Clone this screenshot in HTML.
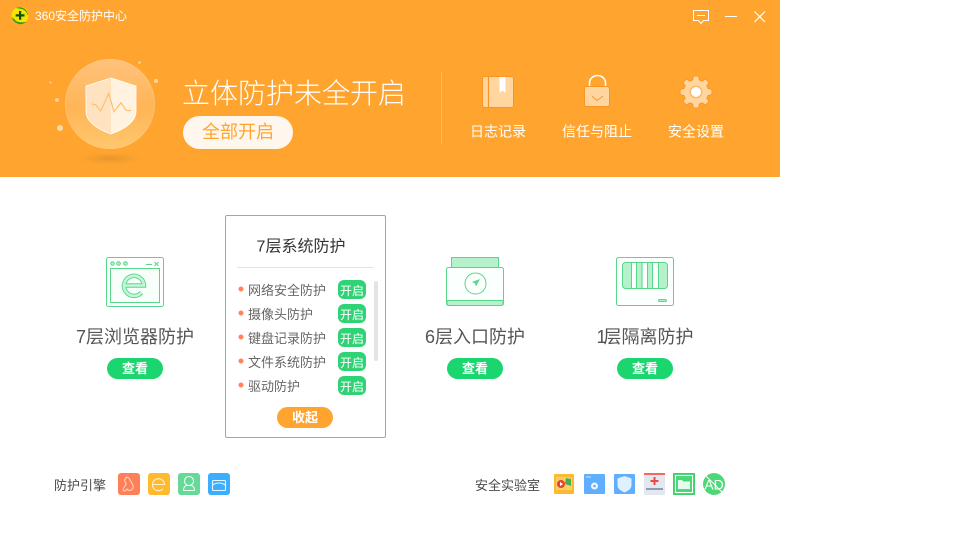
<!DOCTYPE html>
<html lang="zh"><head><meta charset="utf-8"><title>360安全防护中心</title>
<style>
html,body{margin:0;padding:0;background:#fff}
body{position:relative;width:960px;height:540px;overflow:hidden;font-family:"Liberation Sans","Noto Sans CJK SC",sans-serif;color:#4a4a4a}
.t{position:absolute;white-space:nowrap;text-align:center;transform:translate(-50%,-50%);line-height:1.2}
.l{position:absolute;white-space:nowrap;transform:translateY(-50%);line-height:1.2}
svg{position:absolute;left:0;top:0}
.w{color:#fff}
</style></head><body>
<svg width="960" height="540" viewBox="0 0 960 540">
<defs>
<linearGradient id="lg" x1="0" y1="0" x2="0" y2="1"><stop offset="0" stop-color="#ffc27c"/><stop offset=".55" stop-color="#ffb556"/><stop offset="1" stop-color="#ffc76e"/></linearGradient>
<radialGradient id="sh"><stop offset="0" stop-color="#e0912a"/><stop offset=".5" stop-color="#ed9a2c" stop-opacity=".7"/><stop offset="1" stop-color="#ffa52f" stop-opacity="0"/></radialGradient>
<radialGradient id="bt"><stop offset=".6" stop-color="#f79a25" stop-opacity=".5"/><stop offset="1" stop-color="#ffa52f" stop-opacity="0"/></radialGradient>
</defs>
<rect width="780" height="177" fill="#ffa52f"/>
<!-- logo -->
<circle cx="20" cy="15.5" r="8.500" fill="#f5e400"/>
<path d="M12 17a8.500 8.500 0 0 0 14 5q-7 1-10-1zM16 8a8.500 8.500 0 0 1 12 8q-2-6-6-7z" fill="#2a9a1e"/>
<path d="M19 11h2.200v3.300h3.300v2.200h-3.300v3.300h-2.200v-3.300h-3.300v-2.200h3.300z" fill="#0c4f12"/>
<!-- window controls -->
<path d="M693.500 10.500h15v10h-5l-2.500 3-2.500-3h-5z" fill="none" stroke="#fff" stroke-width="1"/>
<path d="M697 15.500h8" stroke="#fff"/>
<path d="M725 16.500h12" stroke="#fff"/>
<path d="M754.500 11.500l10.500 10.500M765 11.500l-10.500 10.500" stroke="#fff" stroke-width="1.200"/>
<!-- orb -->
<ellipse cx="110" cy="158.500" rx="38" ry="7" fill="url(#sh)" opacity=".8"/>
<circle cx="110" cy="104" r="45" fill="url(#lg)"/>
<circle cx="110" cy="104" r="44.500" fill="none" stroke="#ffd199" stroke-opacity=".35"/>
<path d="M111 78l25 8v25q0 14-25 23q-25-9-25-23v-25z" fill="#fff3e0"/>
<path d="M111 78l-25 8v25q0 14 25 23z" fill="#ffe3c0"/>
<path d="M111 78l25 8v25q0 14-25 23q-25-9-25-23v-25z" fill="none" stroke="#fff" stroke-width=".8"/>
<path d="M91.700 104l4.300 1 4.700 6 8-17.700 5.300 18.400 7-9 5 7.600 5 .4" fill="none" stroke="#ffbe73" stroke-width="1.200"/>
<circle cx="60" cy="128" r="3" fill="#ffd9a8"/><circle cx="57" cy="100" r="2" fill="#ffcf96"/><circle cx="50.500" cy="82.500" r="1.300" fill="#ffc684"/><circle cx="156" cy="81" r="2" fill="#ffd39f"/><circle cx="139.500" cy="62.500" r="1.500" fill="#ffc788"/>
<!-- all-on button -->
<ellipse cx="238" cy="138" rx="68" ry="26" fill="url(#bt)" opacity=".55"/>
<rect x="183" y="116" width="110" height="33" rx="16.500" fill="#fff6ee"/>
<path d="M441.500 72v72" stroke="#fff" stroke-opacity=".25"/>
<!-- book -->
<rect x="482.500" y="76.500" width="31" height="31" rx="2" fill="#ffd6a0" stroke="#fb9423"/>
<path d="M488.500 76.500v31" stroke="#fb9423" stroke-width="1.200"/>
<path d="M499.500 77h6v16l-3-2.500-3 2.500z" fill="#fff"/>
<!-- lock -->
<path d="M589.500 87v-4a8 7.500 0 0 1 16 0v4" fill="none" stroke="#fff" stroke-width="1.600"/>
<rect x="584.500" y="86.500" width="25" height="20" rx="2" fill="#ffd6a0" stroke="#fb9423"/>
<path d="M592 96l5 4.500 6-4.500" fill="none" stroke="#f59a33"/>
<!-- gear -->
<path d="M693 76.500h6l1 4.500 3 1.300 4-2.500 4 4-2.500 4 1.300 3 4.500 1v6l-4.500 1-1.300 3 2.500 4-4 4-4-2.500-3 1.300-1 4.500h-6l-1-4.500-3-1.300-4 2.500-4-4 2.500-4-1.300-3-4.500-1v-6l4.500-1 1.300-3-2.500-4 4-4 4 2.500 3-1.300z" transform="translate(696 92) scale(.87) translate(-696 -94.800)" fill="#ffd6a0" stroke="#fb9423" stroke-width="1.100"/>
<circle cx="696" cy="92" r="6.500" fill="#fb9423" opacity=".45"/><circle cx="696" cy="92" r="5" fill="#fff"/>
<!-- browser icon -->
<g stroke="#58d68a" fill="none">
<rect x="106.500" y="257.500" width="57" height="49" rx="2" fill="#fff"/>
<rect x="110.500" y="268.500" width="49" height="34" fill="#f8fffb"/>
<circle cx="112.500" cy="263.500" r="1.800" fill="#b5f2cc"/><circle cx="118.500" cy="263.500" r="1.800" fill="#b5f2cc"/><circle cx="125.500" cy="263.500" r="1.800" fill="#b5f2cc"/>
<path d="M146 264.500h6M154.500 262l4 4M158.500 262l-4 4"/>
<path d="M124.500 285.500h19.500a10 10 0 1 0-2.500 7" stroke="#58d68a" stroke-width="4.400"/>
<path d="M124.500 285.500h19.500a10 10 0 1 0-2.500 7" stroke="#c4f5d7" stroke-width="2.600"/>
</g>
<!-- gateway icon -->
<g stroke="#58d68a">
<rect x="451.500" y="257.500" width="47" height="11" fill="#b5f2cc"/>
<rect x="446.500" y="267.500" width="57" height="38" rx="2" fill="#fbfffd"/>
<path d="M447 300.500h56v3a2 2 0 0 1-2 2h-52a2 2 0 0 1-2-2z" fill="#b5f2cc"/>
<circle cx="475.500" cy="283.500" r="10.500" fill="none"/>
<path d="M480 279l-8 3 3 1.500 1 3z" fill="#58d68a" stroke="none"/>
</g>
<!-- isolate icon -->
<g stroke="#58d68a">
<rect x="616.500" y="257.500" width="57" height="48" rx="2" fill="#fbfffd"/>
<rect x="622.500" y="262.500" width="45" height="26" rx="3" fill="#b5f2cc"/>
<rect x="632" y="263" width="5" height="25" fill="#fbfffd" stroke="none"/><rect x="642" y="263" width="5" height="25" fill="#fbfffd" stroke="none"/><rect x="653" y="263" width="5" height="25" fill="#fbfffd" stroke="none"/>
<path d="M631.500 263v25M636.500 263v25M642 263v25M647.500 263v25M652.500 263v25M658.500 263v25" fill="none"/>
<rect x="658.500" y="299.500" width="8" height="2" rx="1" fill="#b5f2cc"/>
</g>
<!-- view buttons -->
<rect x="107" y="358" width="56" height="21" rx="10.500" fill="#1bd66f"/>
<rect x="447" y="358" width="56" height="21" rx="10.500" fill="#1bd66f"/>
<rect x="617" y="358" width="56" height="21" rx="10.500" fill="#1bd66f"/>
<!-- card -->
<rect x="225.500" y="215.500" width="160" height="222" rx="1.500" fill="#fff" stroke="#5ccf88"/>
<path d="M237 267.500h137" stroke="#c9f0d8"/>
<rect x="374" y="281" width="4" height="80" rx="2" fill="#e4e4e4"/>
<g fill="#ff8258"><circle cx="241" cy="289" r="2.500"/><circle cx="241" cy="313" r="2.500"/><circle cx="241" cy="337" r="2.500"/><circle cx="241" cy="361" r="2.500"/><circle cx="241" cy="385" r="2.500"/></g>
<g fill="#2fd274"><rect x="338" y="280" width="28" height="19" rx="6"/><rect x="338" y="304" width="28" height="19" rx="6"/><rect x="338" y="328" width="28" height="19" rx="6"/><rect x="338" y="352" width="28" height="19" rx="6"/><rect x="338" y="376" width="28" height="19" rx="6"/></g>
<rect x="277" y="407" width="56" height="21" rx="10.500" fill="#ffa52f"/>
<!-- engines -->
<rect x="118" y="473" width="22" height="22" rx="3" fill="#ff8058"/>
<path d="M127 477c-3 2-3 4-1 6 1 2-3 4-3 7 1 2 3 1 4-1 1 2 5 2 6-1 1-3-2-6-3-8-1-2-1-2-3-3z" fill="none" stroke="#ffd2c2" stroke-width="1.100"/>
<rect x="148" y="473" width="22" height="22" rx="3" fill="#ffba30"/>
<path d="M153 484.500h11.500a6 6 0 1 0-1.800 4.500" fill="none" stroke="#fff2d2" stroke-width="1.100"/>
<rect x="178" y="473" width="22" height="22" rx="3" fill="#66d998"/>
<circle cx="189" cy="481" r="4.500" fill="none" stroke="#e9fff2" stroke-width="1.100"/><path d="M183.500 490.500q0-4 3-5h5q3 1 3 5z" fill="none" stroke="#e9fff2" stroke-width="1.100"/>
<rect x="208" y="473" width="22" height="22" rx="3" fill="#3caeff"/>
<rect x="212.500" y="480.500" width="13" height="10" rx="1" fill="none" stroke="#e6f5ff" stroke-width="1.100"/><path d="M212.500 485q6.500-4 13 0" fill="none" stroke="#e6f5ff" stroke-width="1.100"/>
<!-- lab -->
<rect x="554" y="474" width="20" height="20" rx="1" fill="#ffb92e"/>
<rect x="556" y="477" width="16" height="13" fill="#f7d06a"/>
<circle cx="561" cy="484" r="4" fill="#e8452f"/><path d="M560 482v4l3-2z" fill="#fff"/><path d="M566 478l5 1v7l-6-2z" fill="#4cae4f"/>
<rect x="584" y="474" width="21" height="20" rx="1" fill="#61aeff"/><path d="M586 477h5" stroke="#cfe6ff"/>
<circle cx="594.500" cy="486" r="3.500" fill="#fff" opacity=".9"/><circle cx="594.500" cy="486" r="1.300" fill="#61aeff"/>
<rect x="614" y="474" width="21" height="20" rx="1" fill="#61aeff"/>
<path d="M624.500 476l7 2.500v7q0 4-7 7q-7-3-7-7v-7z" fill="#dff0ff"/>
<rect x="644" y="473" width="21" height="22" rx="1" fill="#e3e8f0"/><rect x="644" y="473" width="21" height="2" fill="#f26a5c"/>
<path d="M653.500 477h2v3h3v2h-3v3h-2v-3h-3v-2h3z" fill="#ee4a44"/><rect x="646" y="488" width="17" height="2" fill="#8e9bb0"/>
<rect x="673.500" y="473.500" width="21" height="21" fill="#4dd878" stroke="#3fcf6c"/>
<rect x="675.500" y="475.500" width="17" height="17" fill="#4dd878" stroke="#fff"/>
<path d="M678 480h4l1 1.500h7v7.500h-12z" fill="#e6fbef"/>
<circle cx="714" cy="484" r="11" fill="#4dd878"/>
<path d="M706 476l16 16" stroke="#fff" stroke-width="1"/>
</svg>

<div class="l w" style="left:35px;top:16px;font-size:12px">360安全防护中心</div>
<div class="l w" style="left:182px;top:94px;font-size:28px;font-weight:300">立体防护未全开启</div>
<div class="t" style="left:238px;top:133px;font-size:18px;color:#ffa52f">全部开启</div>
<div class="t w" style="left:498px;top:132px;font-size:14px">日志记录</div>
<div class="t w" style="left:597px;top:132px;font-size:14px">信任与阻止</div>
<div class="t w" style="left:696px;top:132px;font-size:14px">安全设置</div>

<div class="t" style="left:135px;top:338px;font-size:18px;color:#555">7层浏览器防护</div>
<div class="t" style="left:475px;top:338px;font-size:18px;color:#555">6层入口防护</div>
<div class="t" style="left:645px;top:338px;font-size:18px;color:#555"><span style="letter-spacing:-3px">1</span>层隔离防护</div>
<div class="t w" style="left:135px;top:369px;font-size:13px;font-weight:700">查看</div>
<div class="t w" style="left:475px;top:369px;font-size:13px;font-weight:700">查看</div>
<div class="t w" style="left:645px;top:369px;font-size:13px;font-weight:700">查看</div>

<div class="t" style="left:301px;top:247px;font-size:16px;color:#333">7层系统防护</div>
<div class="l" style="left:248px;top:291px;font-size:13px;color:#666">网络安全防护</div>
<div class="l" style="left:248px;top:315px;font-size:13px;color:#666">摄像头防护</div>
<div class="l" style="left:248px;top:339px;font-size:13px;color:#666">键盘记录防护</div>
<div class="l" style="left:248px;top:363px;font-size:13px;color:#666">文件系统防护</div>
<div class="l" style="left:248px;top:387px;font-size:13px;color:#666">驱动防护</div>
<div class="t w" style="left:352px;top:290.500px;font-size:12px">开启</div>
<div class="t w" style="left:352px;top:314.500px;font-size:12px">开启</div>
<div class="t w" style="left:352px;top:338.500px;font-size:12px">开启</div>
<div class="t w" style="left:352px;top:362.500px;font-size:12px">开启</div>
<div class="t w" style="left:352px;top:386.500px;font-size:12px">开启</div>
<div class="t w" style="left:305px;top:418px;font-size:13px;font-weight:700">收起</div>

<div class="l" style="left:54px;top:486px;font-size:13px">防护引擎</div>
<div class="l" style="left:475px;top:486px;font-size:13px">安全实验室</div>
<div class="t" style="left:714px;top:484.500px;font-size:14px;color:#fff">AD</div>
</body></html>
